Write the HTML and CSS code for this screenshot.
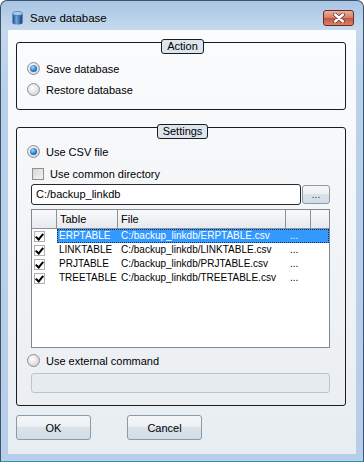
FILE: index.html
```html
<!DOCTYPE html>
<html>
<head>
    <title>Save database</title>
    <link rel="stylesheet" href="styles.css">
</head>
<body>
    <div class="window">
        <div class="titlebar">
            <svg class="app-icon" width="11" height="14" viewBox="0 0 11 14">
                <defs>
                    <linearGradient id="cyl" x1="0" x2="1" y1="0" y2="0">
                        <stop offset="0" stop-color="#1b4a86"/>
                        <stop offset="0.4" stop-color="#6aa6e0"/>
                        <stop offset="1" stop-color="#143a6c"/>
                    </linearGradient>
                </defs>
                <path d="M0.5 2.5v9a5 2 0 0 0 10 0v-9z" fill="url(#cyl)"/>
                <ellipse cx="5.5" cy="2.5" rx="5" ry="2" fill="#a9cdf0" stroke="#2b5a92" stroke-width="0.6"/>
            </svg>
            <span class="title">Save database</span>
            <button class="close-btn">
                <svg width="14" height="10" viewBox="0 0 14 10">
                    <path d="M3 1.5 L11 8.5 M11 1.5 L3 8.5" stroke="#6b3a30" stroke-width="4" stroke-linecap="round"/>
                    <path d="M3 1.5 L11 8.5 M11 1.5 L3 8.5" stroke="#ffffff" stroke-width="2.4" stroke-linecap="round"/>
                </svg>
            </button>
        </div>

        <div class="client">
            <div class="group">
                <div class="legend">Action</div>
                <div class="option first">
                    <span class="radio checked"></span>
                    Save database
                </div>
                <div class="option">
                    <span class="radio"></span>
                    Restore database
                </div>
            </div>

            <div class="group settings">
                <div class="legend">Settings</div>
                <div class="option csv">
                    <span class="radio checked"></span>
                    Use CSV file
                </div>
                <div class="check-row">
                    <span class="checkbox"></span>
                    Use common directory
                </div>
                <div class="path-row">
                    <div class="path-input">C:/backup_linkdb</div>
                    <button class="browse-btn">...</button>
                </div>

                <div class="table">
                    <div class="thead">
                        <div class="th"></div>
                        <div class="th">Table</div>
                        <div class="th">File</div>
                        <div class="th"></div>
                        <div class="th"></div>
                    </div>
                    <div class="trow">
                        <div class="td-check"><span class="tick"></span></div>
                        <div class="tcells selected">
                            <div class="td">ERPTABLE</div>
                            <div class="td">C:/backup_linkdb/ERPTABLE.csv</div>
                            <div class="td">...</div>
                            <div class="td"></div>
                        </div>
                    </div>
                    <div class="trow">
                        <div class="td-check"><span class="tick"></span></div>
                        <div class="tcells">
                            <div class="td">LINKTABLE</div>
                            <div class="td">C:/backup_linkdb/LINKTABLE.csv</div>
                            <div class="td">...</div>
                            <div class="td"></div>
                        </div>
                    </div>
                    <div class="trow">
                        <div class="td-check"><span class="tick"></span></div>
                        <div class="tcells">
                            <div class="td">PRJTABLE</div>
                            <div class="td">C:/backup_linkdb/PRJTABLE.csv</div>
                            <div class="td">...</div>
                            <div class="td"></div>
                        </div>
                    </div>
                    <div class="trow">
                        <div class="td-check"><span class="tick"></span></div>
                        <div class="tcells">
                            <div class="td">TREETABLE</div>
                            <div class="td">C:/backup_linkdb/TREETABLE.csv</div>
                            <div class="td">...</div>
                            <div class="td"></div>
                        </div>
                    </div>
                </div>

                <div class="option ext">
                    <span class="radio"></span>
                    Use external command
                </div>
                <div class="ext-input"></div>
            </div>

            <div class="buttons">
                <button class="btn">OK</button>
                <button class="btn">Cancel</button>
            </div>
        </div>
    </div>
</body>
</html>
```

FILE: styles.css
```css
* {
    margin: 0;
    padding: 0;
    box-sizing: border-box;
}

body {
    font-family: 'Liberation Sans', Arial, sans-serif;
    font-size: 11px;
    color: #000000;
    background-color: #ffffff;
}

.window {
    width: 364px;
    height: 462px;
    display: flex;
    flex-direction: column;
    border: 1px solid #3f5368;
    border-bottom-color: #2f8fb8;
    border-radius: 7px 7px 0 0;
    background: linear-gradient(180deg, #a8c5e4 0px, #c5d9ee 28px, #bad1ea 80px, #b6cee9 100%);
}

.titlebar {
    height: 29px;
    display: flex;
    align-items: center;
    padding: 5px 9px 0 11px;
}

.app-icon {
    margin-right: 7px;
}

.title {
    flex: 1;
    font-size: 11.5px;
}

.close-btn {
    width: 31px;
    height: 16px;
    border: 1px solid #6b2b22;
    border-radius: 3px;
    background: linear-gradient(#eab0a0, #d57e68 48%, #c4553d 52%, #d9826a);
    display: flex;
    align-items: center;
    justify-content: center;
}

.client {
    flex: 1;
    margin: 0 7px 7px;
    padding: 12px 10px 0 8px;
    background: linear-gradient(#fbfcfd, #e8edf1);
    display: flex;
    flex-direction: column;
}

.group {
    border: 1px solid #1c1c1c;
    border-radius: 3px;
    display: flex;
    flex-direction: column;
    padding: 0 15px 9px 14px;
}

.settings {
    margin-top: 17px;
    padding-bottom: 12px;
}

.legend {
    align-self: center;
    height: 15px;
    margin: -4px 0 0 4px;
    padding: 0 5px;
    border: 1px solid #1c1c1c;
    border-radius: 3px;
    background-color: #dbe5ee;
    line-height: 13px;
}

.option {
    display: flex;
    align-items: center;
    gap: 6px;
    height: 21px;
    margin-left: -4px;
}

.option.first {
    margin-top: 4px;
}

.option.csv {
    margin-top: 2px;
}

.option.ext {
    margin-top: 2px;
}

.radio {
    width: 13px;
    height: 13px;
    border-radius: 50%;
    border: 1px solid #8e9092;
    background: radial-gradient(circle at 40% 35%, #ffffff, #dcdcdc 65%, #c6c6c6);
    display: flex;
    align-items: center;
    justify-content: center;
}

.radio.checked::after {
    content: "";
    width: 7px;
    height: 7px;
    border-radius: 50%;
    background: radial-gradient(circle at 40% 35%, #a8dcff, #2a86d6 50%, #0b3f7e);
}

.check-row {
    display: flex;
    align-items: center;
    gap: 6px;
    height: 21px;
    margin: 1px 0 0 1px;
}

.checkbox {
    width: 12px;
    height: 12px;
    border: 1px solid #8f8f8f;
    background: linear-gradient(135deg, #d6d6d6, #f4f4f4);
}

.path-row {
    display: flex;
    align-items: center;
    height: 21px;
}

.path-input {
    width: 270px;
    height: 21px;
    border: 1px solid #2a2a2a;
    border-radius: 3px;
    background-color: #ffffff;
    padding-left: 4px;
    line-height: 19px;
}

.browse-btn,
.btn {
    border: 1px solid #8b9aa8;
    border-radius: 3px;
    background: linear-gradient(#f4f7f9, #edf1f4 45%, #dbe3ea 50%, #d2dce5);
    font: inherit;
    color: #000000;
}

.browse-btn {
    width: 28px;
    height: 19px;
    margin-left: 1px;
    line-height: 12px;
    font-size: 10px;
    color: #1f3550;
}

.table {
    margin-top: 4px;
    height: 139px;
    border: 1px solid #828790;
    background-color: #ffffff;
    font-size: 10px;
}

.thead {
    display: grid;
    grid-template-columns: 25px 61px 168px 25px 18px;
    height: 19px;
    font-size: 11px;
}

.th {
    background: linear-gradient(#f8f9fa, #e7eaed);
    border-right: 1px solid #8c9298;
    border-bottom: 1px solid #8c9298;
    padding-left: 3px;
    line-height: 18px;
}

.th:last-child {
    border-right: none;
}

.trow {
    display: grid;
    grid-template-columns: 25px 272px;
    height: 14px;
    line-height: 14px;
}

.td-check {
    display: flex;
    align-items: center;
    padding-left: 2px;
}

.tick {
    width: 11px;
    height: 11px;
    border: 1px solid #b0b0b0;
    background-color: #ffffff;
    position: relative;
}

.tick::after {
    content: "";
    position: absolute;
    left: 2px;
    top: 0px;
    width: 3px;
    height: 6px;
    border-right: 2px solid #000000;
    border-bottom: 2px solid #000000;
    transform: rotate(40deg);
}

.tcells {
    display: grid;
    grid-template-columns: 61px 168px 25px 18px;
}

.tcells.selected {
    background-color: #3399ff;
    color: #ffffff;
    outline: 1px dotted #0c2f66;
    outline-offset: -1px;
}

.td {
    padding-left: 2px;
    white-space: nowrap;
}

.td:nth-child(2) {
    padding-left: 3px;
}

.td:nth-child(3) {
    padding-left: 4px;
}

.ext-input {
    height: 20px;
    margin-top: 2px;
    border: 1px solid #bcc5cd;
    border-radius: 3px;
    background-color: #e6ebef;
}

.buttons {
    display: flex;
    gap: 36px;
    margin-top: 9px;
}

.btn {
    width: 75px;
    height: 25px;
}
```
